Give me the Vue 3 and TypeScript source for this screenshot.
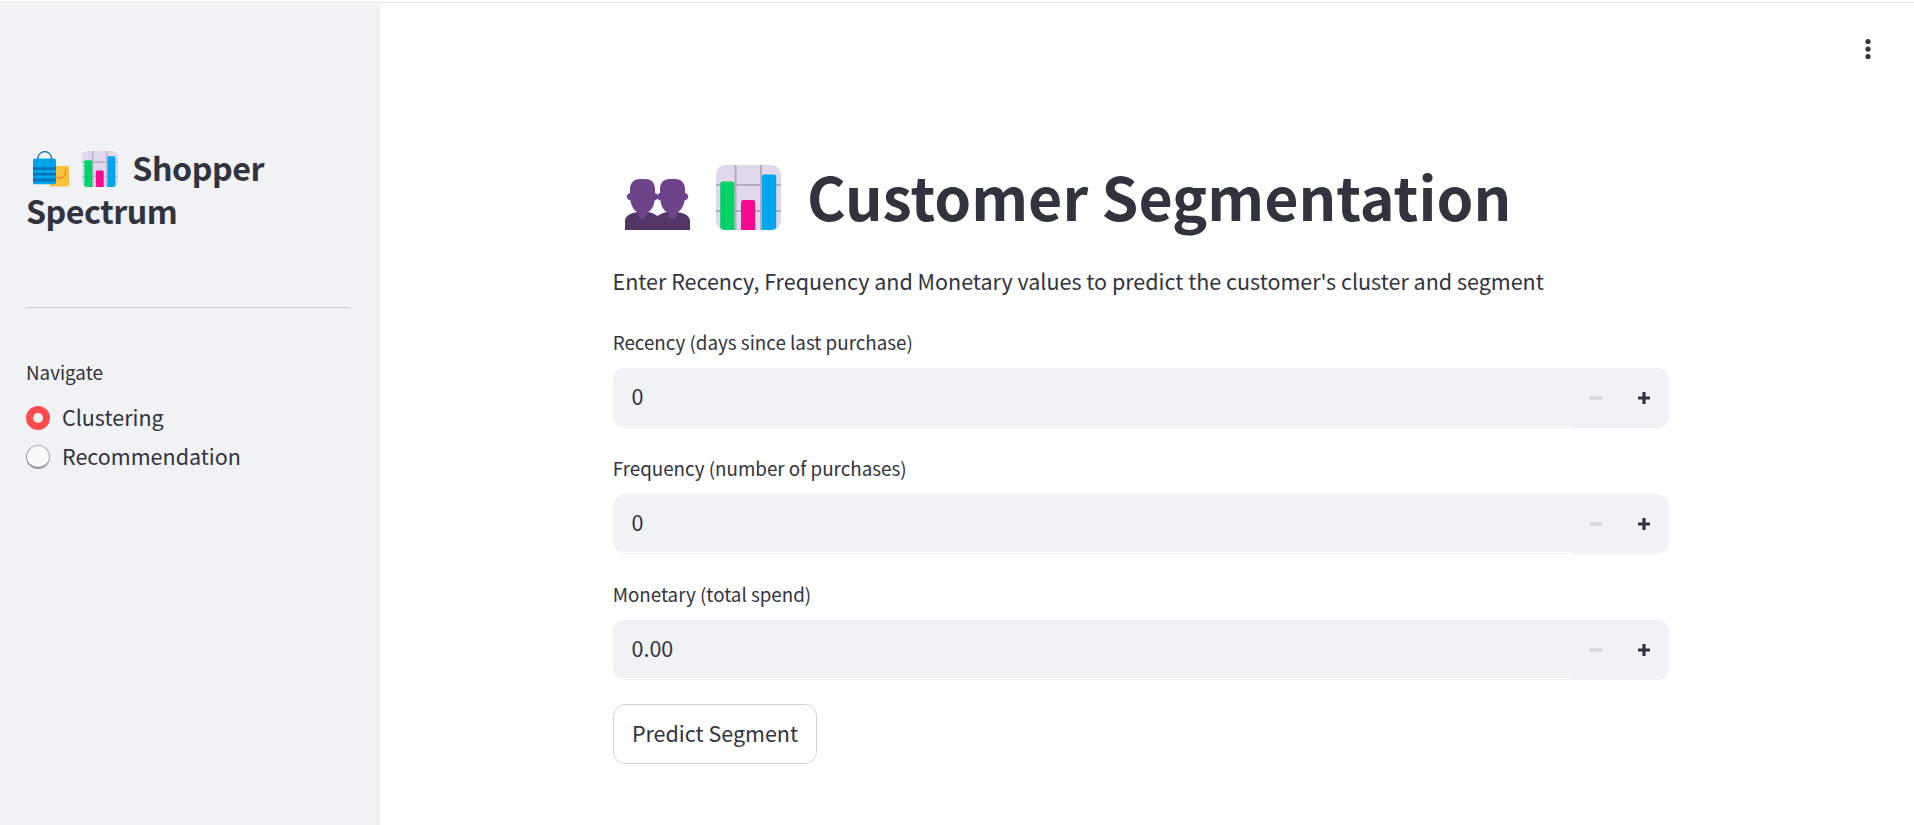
<script setup lang="ts">
import { ref } from 'vue'

interface Field {
  id: string
  label: string
  value: string
}

const pages: string[] = ['Clustering', 'Recommendation']
const current = ref<string>('Clustering')
const fields = ref<Field[]>([
  { id: 'recency', label: 'Recency (days since last purchase)', value: '0' },
  { id: 'frequency', label: 'Frequency (number of purchases)', value: '0' },
  { id: 'monetary', label: 'Monetary (total spend)', value: '0.00' },
])

function increment(field: Field): void {
  const decimals = field.value.includes('.') ? 2 : 0
  field.value = (Number(field.value) + (decimals ? 0.01 : 1)).toFixed(decimals)
}
</script>

<template>
  <div class="app">
    <aside class="sidebar">
      <h2 class="brand">
        <svg class="emoji bags" viewBox="0 0 36 36">
          <rect x="16.5" y="15" width="19.5" height="20.5" rx="1.6" fill="#fac23c" />
          <path d="M22 24.5c.5 2.6 3.200 2.600 5 2.600 4 0 6-3 5.700-8.600" fill="none" stroke="#fb7a25" stroke-width="1.200" stroke-linecap="round" />
          <rect x="0" y="7.500" width="23" height="25.700" rx="1.800" fill="#00a6ed" />
          <path d="M0 16.200h23v2.800H0zM0 22h23v2.500H0zM0 27.500h23v3H0z" fill="#0074ba" />
          <path d="M4.800 10.800V7.500a6.900 6.900 0 0 1 13.800 0v3.300" fill="none" stroke="#0074ba" stroke-width="1.200" stroke-linecap="round" />
        </svg>
        <svg class="emoji small-chart" viewBox="0 0 65 65">
          <rect width="65" height="65" rx="10" fill="#e1d8ec" />
          <path d="M19.500 0v65M45 0v65M0 20h65M0 46h65" stroke="#b4acbc" stroke-width="2.200" />
          <path d="M4.200 19a2.500 2.500 0 0 1 2.500-2.500h9.200a2.500 2.500 0 0 1 2.500 2.500v46H9a7 7 0 0 1-4.800-2z" fill="#00d26a" />
          <path d="M25 65V37.500a2.500 2.500 0 0 1 2.500-2.500h9.200a2.500 2.500 0 0 1 2.500 2.500V65z" fill="#f8098f" />
          <path d="M46 65V12a2.500 2.500 0 0 1 2.500-2.500h9.200A2.500 2.500 0 0 1 60.200 12v51a7 7 0 0 1-4 2z" fill="#00a6ed" />
        </svg>Shopper<br />Spectrum
      </h2>
      <hr class="rule" />
      <p class="nav-label">Navigate</p>
      <div class="radios" role="radiogroup">
        <div
          v-for="page in pages"
          :key="page"
          class="radio"
          role="radio"
          :aria-checked="page === current"
          @click="current = page"
        >
          <span class="dot" :class="{ checked: page === current }"></span>
          <span class="radio-text">{{ page }}</span>
        </div>
      </div>
    </aside>

    <main class="main">
      <svg class="menu" viewBox="0 0 6 22">
        <circle cx="3" cy="3.500" r="2.600" />
        <circle cx="3" cy="11" r="2.600" />
        <circle cx="3" cy="18.500" r="2.600" />
      </svg>
      <section class="content">
        <h1 class="title">
          <svg class="emoji people" viewBox="0 0 65 65">
            <path d="M0 65V56c0-5.500 7-9 14-9h7c5 0 8.500 1.700 11.500 4 3-2.300 6.500-4 11.500-4h7c7 0 14 3.500 14 9v9z" fill="#533566" />
            <path d="M5 28v-4c0-6 4-10 10-10h5.500c6 0 9.500 4 9.500 10v4c1.200.3 2 1 2.500 2 .5-1 1.300-1.700 2.500-2v-4c0-6 3.500-10 9.500-10H50c6 0 10 4 10 10v4c4.400 1 4.400 6.500-.5 7.500-.6 6-4.500 11.500-8 12v2.200a4 4 0 0 1-8 0v-2.200c-4-.8-7.600-6-8-12-1.200-.3-2.300-1-3-2-.7 1-1.800 1.700-3 2-.4 6-4 11.200-8 12v2.200a4 4 0 0 1-8 0v-2.200c-3.500-.5-7.400-6-8-12C.6 34.500.6 29 5 28z" fill="#6d4489" />
          </svg>
          <svg class="emoji chart" viewBox="0 0 65 65">
            <rect width="65" height="65" rx="9" fill="#e1d8ec" />
            <path d="M19.500 0v65M45 0v65M0 20h65M0 46h65" stroke="#b4acbc" stroke-width="2" />
            <path d="M4.200 19a2.500 2.500 0 0 1 2.500-2.500h9.200a2.500 2.500 0 0 1 2.500 2.500v46H9a7 7 0 0 1-4.800-2z" fill="#00d26a" />
            <path d="M25 65V37.500a2.500 2.500 0 0 1 2.500-2.500h9.200a2.500 2.500 0 0 1 2.500 2.500V65z" fill="#f8098f" />
            <path d="M46 65V12a2.500 2.500 0 0 1 2.500-2.500h9.200A2.500 2.500 0 0 1 60.200 12v51a7 7 0 0 1-4 2z" fill="#00a6ed" />
          </svg>
          <span>Customer Segmentation</span>
        </h1>
        <p class="intro">Enter Recency, Frequency and Monetary values to predict the customer's cluster and segment</p>

        <div v-for="field in fields" :key="field.id" class="field">
          <label class="field-label" :for="field.id">{{ field.label }}</label>
          <div class="control">
            <div class="entry">
              <input :id="field.id" v-model="field.value" class="input" type="text" />
            </div>
            <button class="step" disabled aria-label="Decrease">
              <svg viewBox="0 0 12 12"><path d="M0 6h12" stroke="#d5d8e2" stroke-width="3.400" /></svg>
            </button>
            <button class="step" aria-label="Increase" @click="increment(field)">
              <svg viewBox="0 0 12 12"><path d="M0 6h12M6 0v12" stroke="#31333f" stroke-width="3.200" /></svg>
            </button>
          </div>
        </div>

        <button class="predict">Predict Segment</button>
      </section>
    </main>
  </div>
</template>

<style>
body {
  margin: 0;
  background: #fff;
}
</style>

<style scoped>
.app {
  box-sizing: border-box;
  display: flex;
  width: 100%;
  height: 825px;
  padding-top: 4px;
  overflow: hidden;
  color: #31333f;
  font-family: "Noto Sans CJK SC", "Noto Sans", sans-serif;
  font-size: 21.500px;
  background: linear-gradient(#fff 2px, #e2e2e2 2px, #e2e2e2 3px, #fff 3px);
}

.sidebar {
  box-sizing: border-box;
  flex: none;
  width: 380px;
  padding: 142px 30px 0 26px;
  background: #f0f2f6;
}

.brand {
  height: 86px;
  margin: 0;
  font-size: 32.200px;
  font-weight: 600;
  letter-spacing: -0.480px;
  line-height: 43px;
  white-space: nowrap;
}

.emoji {
  display: inline-block;
  flex: none;
}

.bags,
.small-chart {
  width: 36px;
  height: 36px;
  vertical-align: -6px;
}

.bags {
  margin-left: 7px;
}

.small-chart {
  margin: 0 14.500px 0 12.800px;
}

.rule {
  height: 1px;
  margin: 75px 0 0;
  border: 0;
  background: #cbcdd3;
}

.nav-label {
  margin: 48px 0 0;
  font-size: 18.800px;
  line-height: 32px;
}

.radios {
  display: flex;
  flex-direction: column;
  gap: 3px;
  margin-top: 12px;
}

.radio {
  display: flex;
  align-items: center;
  gap: 12px;
  height: 36px;
}

.dot {
  box-sizing: border-box;
  width: 24px;
  height: 24px;
  border-radius: 50%;
  background: linear-gradient(#f9f9fb, #f9f9fb) padding-box, linear-gradient(20deg, #90929b, #b0b2ba) border-box;
  border: 1.500px solid transparent;
  border-width: 1px 1px 2px 1.500px;
}

.dot.checked {
  background: #f0f2f6;
  border: 7.500px solid #ff4b4b;
}

.radio-text {
  padding-bottom: 2px;
  line-height: 34px;
}

.main {
  position: relative;
  flex: 1;
  min-width: 0;
}

.menu {
  position: absolute;
  top: 34px;
  right: 43px;
  width: 6px;
  height: 22px;
  fill: #31333f;
}

.content {
  width: 1056px;
  margin-left: 233px;
  padding-top: 153px;
}

.title {
  display: flex;
  align-items: flex-start;
  height: 80px;
  margin: 0;
  font-size: 59.060px;
  font-weight: 700;
  line-height: 77px;
  white-space: nowrap;
}

.people,
.chart {
  width: 65px;
  height: 65px;
  margin-top: 8px;
}

.people {
  margin-left: 12.400px;
}

.chart {
  margin: 8px 26px 0 25.600px;
}

.intro {
  height: 36px;
  margin: 26px 0 0;
  line-height: 36px;
  text-indent: -0.500px;
  white-space: nowrap;
}

.field {
  margin-top: 24px;
}

.intro + .field {
  margin-top: 27px;
}

.field-label {
  display: block;
  height: 32px;
  margin-bottom: 10px;
  font-size: 18.800px;
  line-height: 32px;
  text-indent: -0.300px;
}

.control {
  display: flex;
  height: 60px;
  overflow: hidden;
  border-radius: 12px;
  background: #f0f2f6;
}

.entry {
  box-sizing: border-box;
  width: 959px;
  height: 60px;
  background: linear-gradient(transparent 58px, #fff 58px, #fff 59px, transparent 59px);
}

.input {
  box-sizing: border-box;
  width: 100%;
  height: 58px;
  padding: 0 18.500px 3px;
  border: 0;
  outline: 0;
  color: inherit;
  background: transparent;
  font: inherit;
}

.step {
  display: flex;
  align-items: center;
  justify-content: center;
  width: 48px;
  padding: 0;
  border: 0;
  background: transparent;
}

.step svg {
  width: 12px;
  height: 12px;
}

.predict {
  box-sizing: border-box;
  width: 204px;
  height: 60px;
  margin-top: 24px;
  padding: 0 0 4px;
  border: 1px solid #d3d4d7;
  border-radius: 12px;
  color: inherit;
  background: #fff;
  font: inherit;
  white-space: nowrap;
}
</style>
